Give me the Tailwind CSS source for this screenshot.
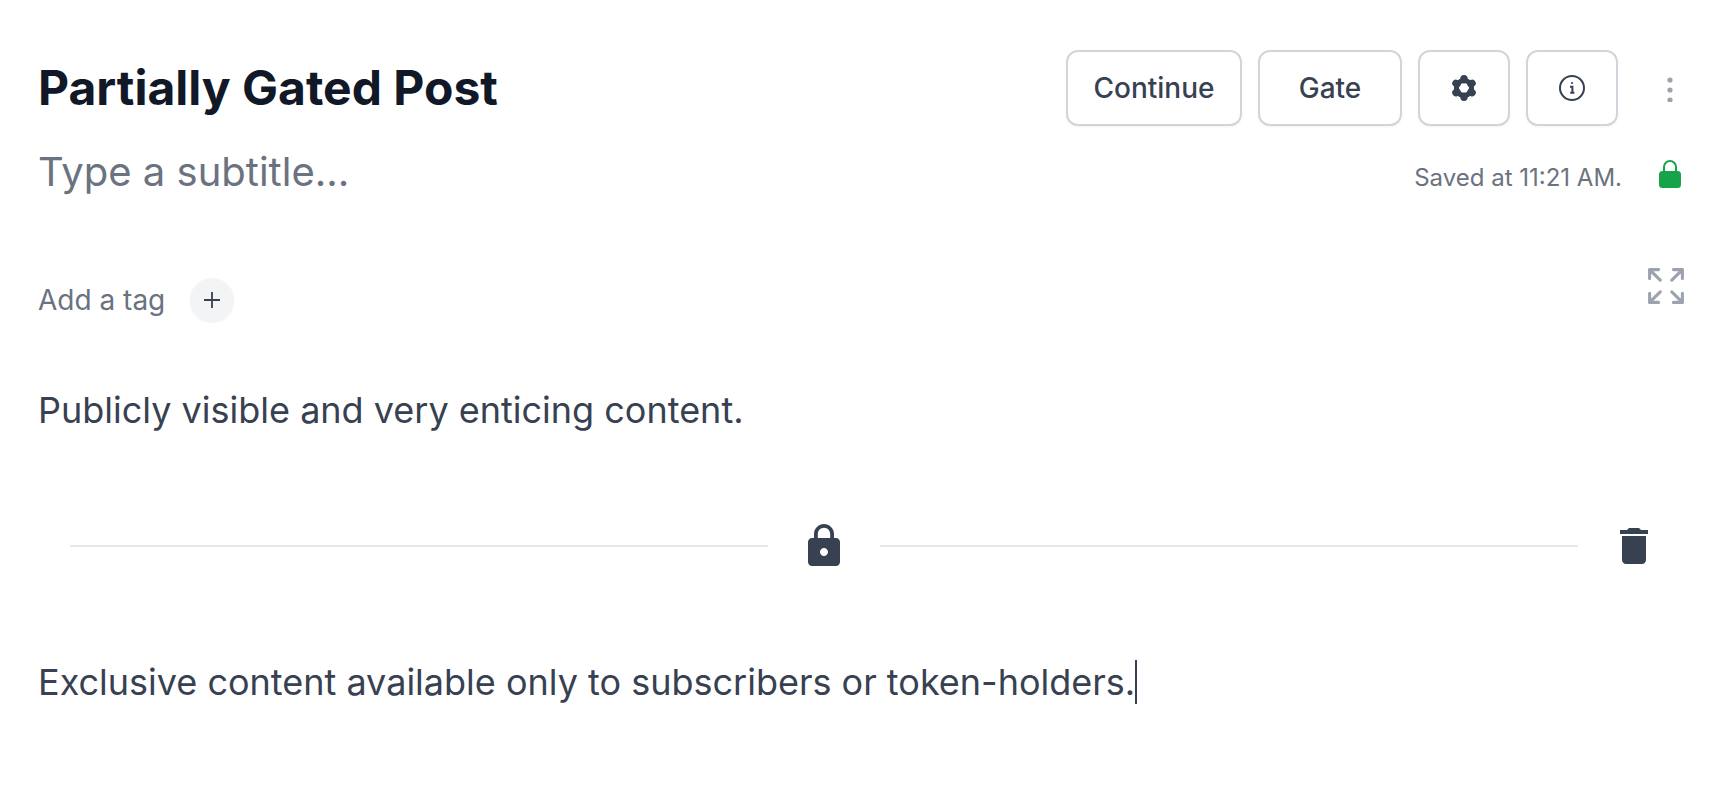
<!DOCTYPE html>
<html lang="en">
<head>
<meta charset="utf-8">
<meta name="viewport" content="width=device-width, initial-scale=1">
<title>Partially Gated Post</title>
<script src="https://cdn.jsdelivr.net/npm/@tailwindcss/browser@4"></script>
</head>
<body class="bg-white font-['Inter',sans-serif] text-[#374151]">
<main class="flex flex-col pt-[50px] pr-[34px] pl-[38px]">
  <header class="flex flex-col gap-[22px]">
    <div class="flex items-center">
      <input aria-label="Title" value="Partially Gated Post" class="h-[74px] min-w-0 flex-1 self-start text-[48px] font-bold text-[#111827] outline-none">
      <div class="flex gap-4">
        <button class="h-[76px] w-[176px] rounded-xl border-2 border-[#d1d5db] bg-white text-[28px] font-medium shadow-xs">Continue</button>
        <button class="h-[76px] w-36 rounded-xl border-2 border-[#d1d5db] bg-white text-[28px] font-medium shadow-xs">Gate</button>
        <button aria-label="Settings" class="flex h-[76px] w-[92px] items-center justify-center rounded-xl border-2 border-[#d1d5db] bg-white shadow-xs">
          <svg class="size-[26px]" viewBox="0 0 26 26" fill="none" stroke="currentColor">
            <circle cx="13" cy="13" r="7.6" stroke-width="5"/>
            <path d="M13 3.8v1M13 21.2v1M4.9 8.3l1.2.7M19.9 17l1.2.7M4.900 17.700l1.200-.7M19.900 9l1.200-.7" stroke-width="7.4" stroke-linecap="round"/>
          </svg>
        </button>
        <button aria-label="Information" class="flex h-[76px] w-[92px] items-center justify-center rounded-xl border-2 border-[#d1d5db] bg-white shadow-xs">
          <svg class="size-[26px]" viewBox="0 0 26 26" fill="none" stroke="currentColor">
            <circle cx="13" cy="13" r="12" stroke-width="2"/>
            <path d="M11 11.800h2.400v5.400M11.200 17.800h4.200" stroke-width="2"/>
            <circle cx="13" cy="8" r="1.1" fill="currentColor" stroke="none"/>
          </svg>
        </button>
      </div>
      <button aria-label="More options" class="ml-[38px] flex h-11 w-7 items-center justify-center text-[#9ca3af]">
        <svg class="h-7 w-7" viewBox="0 0 28 28" fill="currentColor"><circle cx="14" cy="6" r="2.6"/><circle cx="14" cy="16" r="2.6"/><circle cx="14" cy="26" r="2.6"/></svg>
      </button>
    </div>
    <div class="flex h-12 items-baseline text-[#6b7280]">
      <input aria-label="Subtitle" placeholder="Type a subtitle..." class="h-12 min-w-0 flex-1 text-[40px] outline-none placeholder:text-[#6b7280]">
      <p class="text-[24px]">Saved at 11:21 AM.</p>
      <svg class="ml-[34px] h-8 w-7 self-center text-[#16a34a]" viewBox="0 0 28 32" role="img" aria-label="Locked">
        <path d="M8 17v-6a6 6 0 0 1 12 0v6" fill="none" stroke="currentColor" stroke-width="2"/>
        <rect x="3" y="15" width="22" height="17" rx="3.500" fill="currentColor"/>
      </svg>
    </div>
  </header>

  <div class="mt-[72px] flex items-start justify-between">
    <div class="mt-[10px] flex items-center gap-[25px]">
      <label for="add-tag" class="text-[28px] text-[#6b7280]">Add a tag</label>
      <button id="add-tag" aria-label="Add a tag" class="flex size-11 items-center justify-center rounded-full bg-[#f3f4f6] shadow-xs">
        <svg class="size-4" viewBox="0 0 16 16" stroke="currentColor" stroke-width="1.8"><path d="M8 0v16M0 8h16"/></svg>
      </button>
    </div>
    <button aria-label="Full screen" class="text-[#9ca3af]">
      <svg class="size-9" viewBox="0 0 36 36" fill="none" stroke="currentColor" stroke-width="3.1" stroke-linecap="round" stroke-linejoin="round">
        <path d="M1.600 10.600V1.600h9M1.600 1.600l10.600 10.600M25.400 1.600h9v9M34.400 1.600L23.800 12.200M1.600 25.400v9h9M1.600 34.400l10.600-10.600M34.400 25.400v9h-9M34.400 34.400L23.800 23.800"/>
      </svg>
    </button>
  </div>

  <article class="mt-[60px] text-[36px] leading-[56px]">
    <p>Publicly visible and very enticing content.</p>
    <div class="my-[84px] ml-8 mr-[26px] flex items-center gap-8">
      <hr class="flex-1 border-t-2 border-[#e5e7eb]">
      <svg class="size-12" viewBox="0 0 24 24" fill="currentColor" role="img" aria-label="Gated content below"><path d="M18 8h-1V6c0-2.760-2.240-5-5-5S7 3.240 7 6v2H6c-1.100 0-2 .9-2 2v10c0 1.100.9 2 2 2h12c1.100 0 2-.9 2-2V10c0-1.100-.9-2-2-2zm-6 9c-1.100 0-2-.9-2-2s.9-2 2-2 2 .9 2 2-.9 2-2 2zm3.100-9H8.900V6c0-1.710 1.390-3.100 3.100-3.100s3.100 1.390 3.100 3.100v2z"/></svg>
      <hr class="flex-1 border-t-2 border-[#e5e7eb]">
      <button aria-label="Delete gate"><svg class="size-12" viewBox="0 0 24 24" fill="currentColor"><path d="M6 19c0 1.100.9 2 2 2h8c1.100 0 2-.9 2-2V7H6v12zM19 4h-3.500l-1-1h-5l-1 1H5v2h14V4z"/></svg></button>
    </div>
    <p class="flex items-center">Exclusive content available only to subscribers or token-holders.<span class="h-11 w-[2px] bg-[#374151]"></span></p>
  </article>
</main>
</body>
</html>
